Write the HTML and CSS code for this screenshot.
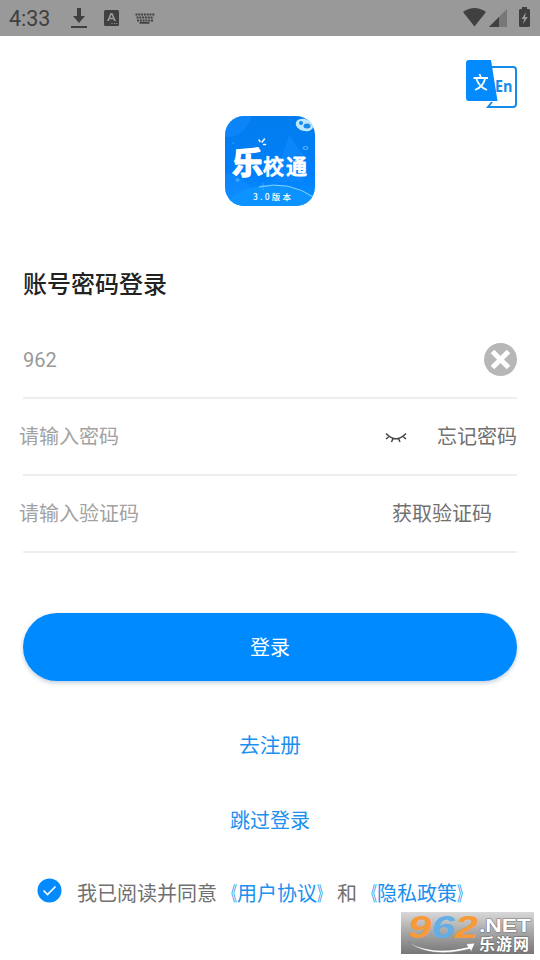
FILE: index.html
```html
<!DOCTYPE html>
<html lang="zh-CN">
<head>
<meta charset="utf-8">
<title>乐校通</title>
<link rel="stylesheet" href="styles.css">
</head>
<body>
<header class="status">
  <span class="clock">4:33</span>
  <svg class="download" width="16" height="20" viewBox="0 0 16 20"><path d="M6 0h4v8h4l-6 7-6-7h4zM0 18h16v2H0z"/></svg>
  <svg class="ime" width="15" height="16" viewBox="0 0 15 16"><rect width="15" height="16" rx="1.5"/><path class="cut" d="M3 11 6.500 3h2L12 11h-2l-.6-1.700H5.600L5 11zM6.200 7.800h2.600L7.500 4.700zM7.500 13h1v1h-1zM10 13h1v1h-1zM12.300 13h1v1h-1z"/></svg>
  <svg class="keyboard" width="20" height="11" viewBox="0 0 20 11"><path class="keys" d="M.5 1.500h19M1.500 4.500h17M2 7.500h16"/><path d="M4.500 9h10v1.700h-10z"/></svg>
  <span class="spacer"></span>
  <svg width="23" height="19" viewBox="0 0 23 19"><path d="M0 4Q11.500-4 23 4L11.500 18.500z"/></svg>
  <svg class="signal" width="18" height="18" viewBox="0 0 18 18"><path class="faint" d="M18 0v18H0z"/><path d="M10 8v10H0z"/></svg>
  <svg class="battery" width="11" height="20" viewBox="0 0 11 20"><path d="M3 0h5v2h2l1 1v16l-1 1H1l-1-1V3l1-1h2z"/><path class="cut" d="M7 5 2.500 12h2.700L4 17l4.800-7H6z"/></svg>
</header>
<main>
  <div class="language">
    <svg width="52" height="50" viewBox="0 0 52 50">
      <path class="page" d="M25 7h22q3 0 3 3v34q0 3-3 3H22l4-5"/>
      <path class="blue" d="M3 0h22l6.500 41H3q-3 0-3-3V3q0-3 3-3z"/>
      <path class="wen" d="M13.500 14l1.500 3.500M7.500 18h14.500M10.500 19q2.500 8 10.500 11M19 19q-2 8-10 11"/>
      <text x="29" y="32" textLength="17.500" lengthAdjust="spacingAndGlyphs">En</text>
    </svg>
  </div>
  <svg class="logo" width="90" height="90" viewBox="0 0 90 90">
    <defs>
      <linearGradient id="sky" x2="0" y2="1"><stop stop-color="#027dec"/><stop offset=".65" stop-color="#007ffb"/><stop offset="1" stop-color="#0792ff"/></linearGradient>
      <clipPath id="tile"><rect width="90" height="90" rx="19"/></clipPath>
    </defs>
    <g clip-path="url(#tile)">
      <rect width="90" height="90" fill="url(#sky)"/>
      <path d="M0 0h27q-8 22-27 21zM64 19l16 22-9-3 8 28H49zM0 57q17 2 29 18L9 90H0z" fill="#168bff" opacity=".5"/>
      <path d="M0 85Q43 54 90 82V90H0z" fill="#0c93ff"/>
      <path d="M34 71Q64 64 90 82" fill="none" stroke="#8bd4ff" stroke-width="1"/>
      <ellipse cx="79.500" cy="9" rx="9" ry="6" fill="#bde6ff" transform="rotate(15 79.500 9)"/>
      <circle cx="76" cy="7" r="2" fill="#168bea"/><ellipse cx="82" cy="10" rx="3.500" ry="2.500" fill="#168bea"/>
      <g fill="none" stroke="#62baff"><ellipse cx="80.500" cy="32" rx="2.500" ry="1.500"/><ellipse cx="12.500" cy="64" rx="1.500" ry="1"/><path d="M7 27h3M38 67v7M35 70h7" stroke-width=".5"/></g>
      <path d="M34 24l1 1.500M37 26l2.500-3M38.500 28.500h2" stroke="#fff" stroke-width="1.500" stroke-linecap="round"/>
      <text class="le" x="7" y="58">乐</text>
      <text class="xiaotong" x="38" y="57.500" textLength="44">校通</text>
      <text class="version" x="28" y="84" textLength="38">3.0版本</text>
    </g>
  </svg>
  <h1>账号密码登录</h1>
  <section class="fields">
    <div class="field account"><span class="value">962</span>
      <svg width="33" height="33" viewBox="0 0 33 33"><circle cx="16.500" cy="16.500" r="16.500" fill="#b7b7b7"/><path d="M8.500 8.500l16 16M24.500 8.500l-16 16" stroke="#fff" stroke-width="5"/></svg>
    </div>
    <div class="field"><span class="hint">请输入密码</span>
      <svg class="eye" width="22" height="12" viewBox="0 0 22 12"><path d="M1 1.500Q11 12 21 1.500M4 4.500 1 7M8 6.500 6.500 10M13.500 6.500l1.500 3.500M18 4.500 21 7"/></svg>
      <span class="action">忘记密码</span>
    </div>
    <div class="field code"><span class="hint">请输入验证码</span><span class="action">获取验证码</span></div>
  </section>
  <div class="login">登录</div>
  <div class="link register">去注册</div>
  <div class="link skip">跳过登录</div>
  <div class="agreement">
    <svg width="25" height="25" viewBox="0 0 25 25"><circle cx="12.500" cy="12.500" r="12" fill="#048aff"/><path d="M6.500 12.500l4 4 8-8" fill="none" stroke="#fff" stroke-width="1.700"/></svg>
    <span class="terms">我已阅读并同意<b><i class="open">《</i>用户协议<i class="close">》</i></b>和<b><i class="open">《</i>隐私政策<i class="close">》</i></b></span>
  </div>
</main>
<svg class="watermark" width="133" height="42" viewBox="0 0 133 42">
  <defs><linearGradient id="shade" x2="0" y2="1"><stop stop-color="#d8d8d8"/><stop offset=".45" stop-color="#aaa"/><stop offset="1" stop-color="#777"/></linearGradient></defs>
  <rect width="133" height="42" fill="url(#shade)"/>
  <path d="M7 30Q31 44 67 35l-2-3 9-1-4 9-1-3Q29 47 7 30z" fill="#fff" stroke="#777" stroke-width=".5"/>
  <text class="digits" x="7" y="26" textLength="70" lengthAdjust="spacingAndGlyphs"><tspan fill="#f79a3a">9</tspan><tspan fill="#62aee5">6</tspan><tspan fill="#f79a3a">2</tspan></text>
  <text class="net" x="78" y="20" textLength="52" lengthAdjust="spacingAndGlyphs">.NET</text>
  <text class="site" x="78" y="38" textLength="50">乐游网</text>
</svg>
</body>
</html>
```
FILE: styles.css
```css
* { box-sizing: border-box; }
body {
  margin: 0;
  width: 540px;
  height: 960px;
  position: relative;
  overflow: hidden;
  background: #fff;
  color: #707070;
  font: 400 20px/30px Roboto, "Noto Sans CJK SC", sans-serif;
}
svg { display: block; flex: none; }
.status {
  height: 36px;
  padding: 0 10px 2px 9px;
  display: flex;
  align-items: center;
  background: #999;
  fill: #404040;
}
.clock { width: 62px; padding-top: 3px; font-size: 21.500px; color: #404040; }
.download { margin-top: 2px; }
.ime { margin: 2px 0 0 17px; }
.keyboard { margin: 2px 0 0 16px; }
.keys { stroke: #404040; stroke-width: 2; stroke-dasharray: 2 .8; }
.cut { fill: #999; }
.spacer { flex: 1; }
.signal { margin: 2px 0 0 3px; }
.faint { fill: #777; }
.battery { margin-left: 12px; }
main { display: flex; flex-direction: column; padding: 24px 23px 0; }
.language { height: 56px; align-self: flex-end; margin-right: -1px; }
.blue { fill: #048aff; }
.page { fill: #fff; stroke: #168be8; stroke-width: 2; }
.wen { fill: none; stroke: #fff; stroke-width: 1.800; }
.language text { font: 700 16px "Open Sans", sans-serif; fill: #168be8; }
.logo { align-self: center; }
.logo text { fill: #fff; font-family: "Noto Sans CJK SC", sans-serif; }
.logo .le { font-size: 31px; font-weight: 700; stroke: #fff; stroke-width: 1.500; stroke-linejoin: round; }
.logo .xiaotong { font-size: 21px; font-weight: 500; stroke: #fff; stroke-width: .8; stroke-linejoin: round; }
.logo .version { font-size: 8.500px; font-weight: 500; }
h1 { margin: 61px 0 0; height: 55px; font-size: 24px; line-height: 36px; font-weight: 500; color: #222; }
.field {
  height: 77px;
  display: flex;
  align-items: center;
  border-bottom: 2px solid #eee;
}
.value, .hint { flex: 1; color: #999; }
.hint { margin-left: -4px; color: #a2a2a2; padding-top: 1px; }
.action { padding-top: 1px; }
.eye { margin: 2px 30px 0 0; fill: none; stroke: #444; stroke-width: 1.500; }
.code { padding-right: 25px; }
.login {
  height: 68px;
  margin-top: 60px;
  padding-top: 1px;
  border-radius: 34px;
  background: #008aff;
  box-shadow: 0 2px 4px rgba(0, 60, 120, .25);
  color: #fff;
  text-align: center;
  line-height: 68px;
}
.link { color: #1b90ee; text-align: center; }
.register { margin-top: 50px; font-size: 20.700px; }
.skip { margin-top: 45px; }
.agreement { display: flex; gap: 15px; margin: 42px 0 0 14px; white-space: nowrap; }
.terms { padding-top: 1px; }
.agreement b { font-weight: 400; color: #1b90ee; }
.agreement i { display: inline-block; width: 20px; font-style: normal; transform: scaleX(.6); }
.open { transform-origin: right; }
.close { transform-origin: left; }
.watermark { position: absolute; left: 401px; top: 912px; overflow: visible; }
.digits { font: italic 700 32px "Liberation Sans", sans-serif; }
.net { font: 700 18px "Liberation Sans", sans-serif; fill: #fff; stroke: #777; stroke-width: 1; paint-order: stroke; }
.site { font: 700 16px "Noto Sans CJK SC", sans-serif; fill: #fff; stroke: #666; stroke-width: 1; paint-order: stroke; }
```
